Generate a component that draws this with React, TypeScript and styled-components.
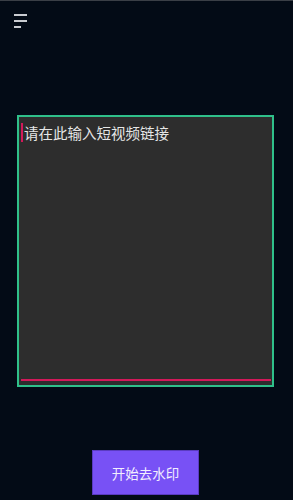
import styled, { createGlobalStyle } from "styled-components";

const GlobalStyle = createGlobalStyle`
  html, body {
    margin: 0;
    padding: 0;
    background: #030b16;
    font-family: "Noto Sans CJK SC", "Noto Sans", sans-serif;
  }
`;

const Page = styled.div`
  width: 293px;
  height: 500px;
  display: flex;
  flex-direction: column;
  background: #030b16;
  box-sizing: border-box;
  border-top: 1px solid #3a3f46;
`;

const TopBar = styled.div`
  height: 114px;
  padding: 13px 0 0 14px;
  box-sizing: border-box;
`;

const MenuButton = styled.div`
  display: flex;
  flex-direction: column;
  gap: 4px;
  width: 14px;
`;

const MenuLine = styled.span<{ $w: number }>`
  display: block;
  width: ${(p) => p.$w}px;
  height: 2px;
  background: #c9ccd1;
`;

const InputBox = styled.div`
  margin: 0 19px 0 17px;
  height: 272px;
  border: 2px solid #2fc08a;
  background: #2d2d2d;
  box-sizing: border-box;
  display: flex;
  flex-direction: column;
  padding: 4px 1px 4px 2px;
`;

const Field = styled.div`
  flex: 1;
  display: flex;
  align-items: flex-start;
  border-bottom: 2px solid #d3195a;
`;

const Caret = styled.span`
  width: 2px;
  height: 19px;
  margin-top: 2px;
  background: #d3195a;
`;

const Placeholder = styled.span`
  font-size: 14.5px;
  line-height: 24px;
  margin-left: 1px;
  color: #e6e6e6;
`;

const Footer = styled.div`
  flex: 1;
  display: flex;
  justify-content: center;
  align-items: flex-end;
  padding: 0 2px 5px 0;
`;

const StartButton = styled.button`
  width: 107px;
  height: 45px;
  background: #7851f5;
  border: 1px solid #5a3bc0;
  color: #f2eefe;
  font-family: "Noto Sans CJK SC", "Noto Sans", sans-serif;
  font-size: 13.5px;
  padding: 0;
`;

export default function App() {
  return (
    <>
      <GlobalStyle />
      <Page>
        <TopBar>
          <MenuButton>
            <MenuLine $w={13} />
            <MenuLine $w={13} />
            <MenuLine $w={7} />
          </MenuButton>
        </TopBar>
        <InputBox>
          <Field>
            <Caret />
            <Placeholder>请在此输入短视频链接</Placeholder>
          </Field>
        </InputBox>
        <Footer>
          <StartButton>开始去水印</StartButton>
        </Footer>
      </Page>
    </>
  );
}
